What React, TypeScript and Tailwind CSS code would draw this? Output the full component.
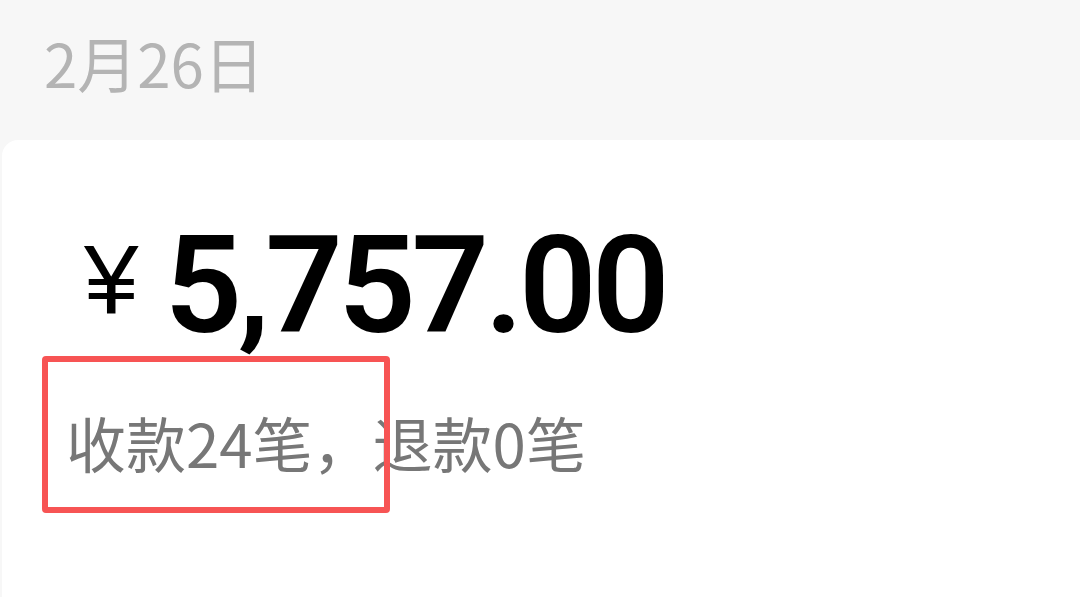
import React from "react";

export default function App() {
  return (
    <div className="relative w-[1080px] h-[597px] overflow-hidden bg-[#f7f7f7]">
      <div className="h-[140px] pl-[44px] pt-[22px]">
        <div
          className="text-[60px] leading-[80px] text-[#b4b4b4]"
          style={{ fontFamily: '"Noto Sans CJK SC", sans-serif' }}
        >
          2月26日
        </div>
      </div>
      <div className="ml-[2px] mr-[-20px] h-[457px] bg-white rounded-t-[16px]">
        <div className="pl-[82px] pt-[80px] h-[262px]">
          <div className="whitespace-nowrap text-black leading-[120px]">
            <span
              className="text-[98px] font-normal align-[18px] mr-[26px]"
              style={{ fontFamily: '"Liberation Sans", Arial, sans-serif' }}
            >
              ¥
            </span>
            <span
              className="text-[136px] font-semibold tracking-[-4.5px]"
              style={{ fontFamily: 'Roboto, "Liberation Sans", sans-serif' }}
            >
              5,757.00
            </span>
          </div>
        </div>
        <div
          className="pl-[64px] text-[60px] leading-[80px] text-[#777777] whitespace-nowrap"
          style={{ fontFamily: '"Noto Sans CJK SC", sans-serif' }}
        >
          收款24笔，退款0笔
        </div>
      </div>
      <div className="absolute left-[42px] top-[356px] w-[348px] h-[157px] border-[6px] border-[#f75454] rounded-[4px]"></div>
    </div>
  );
}
